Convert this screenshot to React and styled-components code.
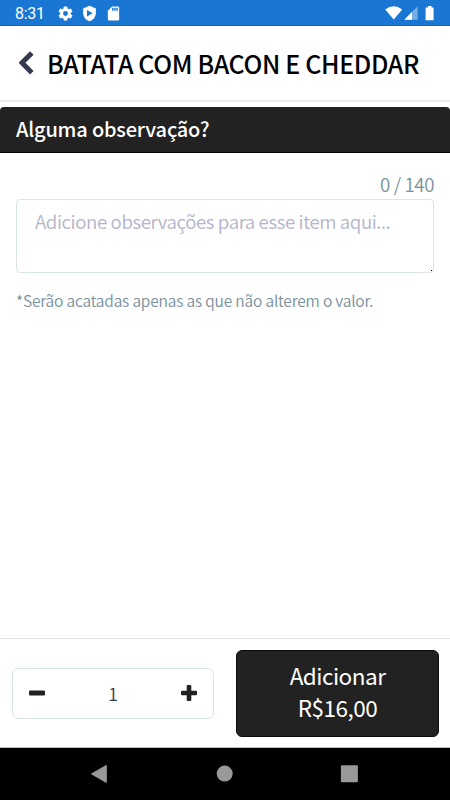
import React, { useState } from "react";

import styled, { createGlobalStyle } from "styled-components";

export default function App() {
  const [note, setNote] = useState("");
  const [amount, setAmount] = useState(1);

  return (
    <Screen>
      <GlobalStyle />
      <StatusBar />
      <Header>
        <BackButton aria-label="Voltar">
          <svg width="16" height="26" viewBox="0 0 16 26">
            <path
              d="M12.8 2.9 3 12.8l9.8 9.9"
              fill="none"
              stroke="#333a50"
              strokeWidth="5"
            />
          </svg>
        </BackButton>
        <Title>BATATA COM BACON E CHEDDAR</Title>
      </Header>
      <SectionTitle>Alguma observação?</SectionTitle>
      <Content>
        <Counter>{note.length} / 140</Counter>
        <NoteBox>
          <NoteInput
            maxLength={140}
            value={note}
            placeholder="Adicione observações para esse item aqui..."
            onChange={(e) => setNote(e.target.value)}
          />
          <Grip />
        </NoteBox>
        <Hint>*Serão acatadas apenas as que não alterem o valor.</Hint>
      </Content>
      <Footer>
        <Stepper>
          <StepButton aria-label="Menos" onClick={() => setAmount(Math.max(1, amount - 1))}>
            <svg width="16" height="16" viewBox="0 0 16 16">
              <rect y="5.6" width="16" height="4.8" rx="1" fill="#222" />
            </svg>
          </StepButton>
          <Amount>{amount}</Amount>
          <StepButton aria-label="Mais" onClick={() => setAmount(amount + 1)}>
            <svg width="16" height="16" viewBox="0 0 16 16" fill="#222">
              <rect y="5.7" width="16" height="4.6" rx="1" />
              <rect x="5.7" width="4.6" height="16" rx="1" />
            </svg>
          </StepButton>
        </Stepper>
        <AddButton>
          <span>Adicionar</span>
          <span>R$16,00</span>
        </AddButton>
      </Footer>
      <NavBar>
        <svg width="18" height="20" viewBox="0 0 18 20">
          <path d="M16.3 1.4v17L1.5 9.9z" fill="#999" stroke="#999" strokeLinejoin="round" />
        </svg>
        <svg width="18" height="20" viewBox="0 0 18 20">
          <circle cx="9.7" cy="9.6" r="8" fill="#999" />
        </svg>
        <svg width="18" height="20" viewBox="0 0 18 20">
          <rect x="0.9" y="1.2" width="17" height="17" rx="1" fill="#999" />
        </svg>
      </NavBar>
    </Screen>
  );
}

const StatusBar = () => (
  <Status>
    <Clock>8:31</Clock>
    <StatusIcons>
      <svg width="17" height="17" viewBox="0 0 24 24" fill="#fff">
        <path d="M19.43 12.98c.04-.32.07-.64.07-.98s-.03-.66-.07-.98l2.11-1.65a.5.5 0 0 0 .12-.64l-2-3.46a.5.5 0 0 0-.61-.22l-2.49 1a7.3 7.3 0 0 0-1.69-.98l-.38-2.65A.49.49 0 0 0 14 2h-4a.49.49 0 0 0-.49.42l-.38 2.65c-.61.25-1.17.59-1.69.98l-2.49-1a.5.5 0 0 0-.61.22l-2 3.46a.5.5 0 0 0 .12.64l2.11 1.65a8 8 0 0 0 0 1.96l-2.11 1.65a.5.5 0 0 0-.12.64l2 3.46c.12.22.39.3.61.22l2.49-1c.52.4 1.08.73 1.69.98l.38 2.65c.03.24.24.42.49.42h4c.25 0 .46-.18.49-.42l.38-2.65c.61-.25 1.17-.59 1.69-.98l2.49 1c.23.09.49 0 .61-.22l2-3.46a.5.5 0 0 0-.12-.64zM12 15.5a3.5 3.5 0 1 1 0-7 3.5 3.5 0 0 1 0 7z" />
      </svg>
      <svg width="17" height="17" viewBox="0 0 24 24">
        <path d="M12 1 3 5v6c0 5.55 3.84 10.74 9 12 5.16-1.26 9-6.45 9-12V5z" fill="#fff" />
        <path d="M8.5 7.2v9l8-4.5z" fill="#1976d2" />
      </svg>
      <svg width="17" height="17" viewBox="0 0 24 24">
        <path d="M18 2h-8L4 8v12c0 1.1.9 2 2 2h12c1.1 0 2-.9 2-2V4c0-1.1-.9-2-2-2z" fill="#fff" />
        <path d="M10 4h2v4h-2zM13 4h2v4h-2zM16 4h2v4h-2z" fill="#1976d2" />
      </svg>
    </StatusIcons>
    <Signals>
      <svg width="18" height="14" viewBox="0 0 18 14">
        <path d="M0.2 3.5Q8.7-3 17.2 3.5L8.7 13.5z" fill="#fff" />
      </svg>
      <svg width="14" height="14" viewBox="0 0 14 14">
        <path d="M13.7 0.3v13.4H0.3z" fill="#75ade4" />
        <path d="M8 6v7.7H0.3z" fill="#fff" />
      </svg>
      <svg width="10" height="15" viewBox="0 0 10 15">
        <path d="M3 0h3.6v1.5H8.6v12.7H0.6V1.5H3z" fill="#fff" />
      </svg>
    </Signals>
  </Status>
);

const GlobalStyle = createGlobalStyle`
  * {
    box-sizing: border-box;
  }
  body {
    margin: 0;
    background-color: #fff;
  }
  svg {
    display: block;
  }
`;
const Screen = styled.div`
  display: flex;
  flex-direction: column;
  width: 450px;
  height: 800px;
  overflow: hidden;
  font-family: "Noto Sans CJK JP", "Noto Sans", sans-serif;
`;
const Status = styled.div`
  display: flex;
  align-items: center;
  height: 26px;
  padding: 0 15px;
  background-color: #1976d2;
  border-bottom: 1px solid #1466bd;
`;
const Clock = styled.span`
  width: 42px;
  color: #fff;
  font-family: Roboto, sans-serif;
  font-size: 16px;
  letter-spacing: -0.3px;
  line-height: 28px;
  padding-top: 3px;
`;
const StatusIcons = styled.div`
  display: flex;
  gap: 7px;
  padding-top: 1px;
`;
const Signals = styled.div`
  display: flex;
  align-items: flex-start;
  gap: 1px;
  margin-left: auto;
  padding-top: 1px;
  svg:last-child {
    margin-left: 6px;
  }
`;
const Header = styled.header`
  display: flex;
  align-items: center;
  height: 76px;
  padding-left: 19px;
  border-bottom: 2px solid #ebebeb;
`;
const PlainButton = styled.button`
  margin: 0;
  padding: 0;
  border: none;
  background: none;
`;
const BackButton = styled(PlainButton)`
  width: 28px;
`;
const Title = styled.h1`
  margin: 0;
  font-size: 25px;
  font-weight: 500;
  line-height: 36px;
  letter-spacing: -0.36px;
  color: #000;
  white-space: nowrap;
`;
const SectionTitle = styled.h2`
  height: 46px;
  margin: 5px 0 0;
  padding-left: 16px;
  background-color: #222;
  border-bottom: 1px solid #000;
  border-radius: 4px 4px 0 0;
  color: #fff;
  font-size: 20px;
  font-weight: 500;
  line-height: 43px;
  letter-spacing: -0.19px;
`;
const Content = styled.main`
  flex: 1;
  padding: 17px 16px 0;
`;
const Counter = styled.div`
  height: 29px;
  color: #78909c;
  font-size: 18.7px;
  font-weight: 350;
  line-height: 28px;
  letter-spacing: -0.4px;
  text-align: right;
`;
const NoteBox = styled.div`
  position: relative;
  height: 74px;
  border: 1px solid #dae5ea;
  border-radius: 4px;
`;
const NoteInput = styled.textarea`
  display: block;
  width: 100%;
  height: 100%;
  margin: 0;
  padding: 7px 18px;
  border: none;
  background: none;
  resize: none;
  outline: none;
  overflow: hidden;
  color: #333a50;
  font-family: inherit;
  font-size: 18.7px;
  font-weight: 350;
  line-height: 28px;
  letter-spacing: -0.41px;
  &::placeholder {
    color: #b3b3cb;
    opacity: 1;
  }
`;
const Grip = styled.span`
  position: absolute;
  right: 1px;
  bottom: 1px;
  width: 1px;
  height: 1px;
  background-color: #000;
`;
const Hint = styled.p`
  margin: 15px 0 0;
  color: #78909c;
  font-size: 15.5px;
  font-weight: 350;
  line-height: 24px;
  letter-spacing: -0.18px;
  white-space: nowrap;
`;
const Footer = styled.footer`
  display: flex;
  justify-content: space-between;
  align-items: center;
  height: 110px;
  padding: 0 11px 0 12px;
  border-top: 1px solid #e2e4e5;
  border-bottom: 1px solid #b9c2bd;
`;
const Stepper = styled.div`
  display: flex;
  align-items: center;
  justify-content: space-between;
  width: 202px;
  height: 51px;
  padding: 0 16px;
  border: 1px solid #dae5ea;
  border-radius: 6px;
`;
const StepButton = styled(PlainButton)`
  width: 16px;
`;
const Amount = styled.span`
  padding-top: 2px;
  color: #333a50;
  font-size: 17.5px;
  font-weight: 350;
  line-height: 28px;
`;
const AddButton = styled.button`
  display: flex;
  flex-direction: column;
  align-items: center;
  width: 203px;
  height: 87px;
  padding: 8px 0 0;
  background-color: #222;
  border: 1px solid #0c0c0c;
  border-radius: 6px;
  color: #fff;
  font-family: inherit;
  font-size: 22.5px;
  line-height: 32px;
  letter-spacing: -0.5px;
`;
const NavBar = styled.nav`
  display: flex;
  align-items: center;
  justify-content: space-between;
  height: 52px;
  padding: 0 92px 0 90px;
  background-color: #000;
`;
